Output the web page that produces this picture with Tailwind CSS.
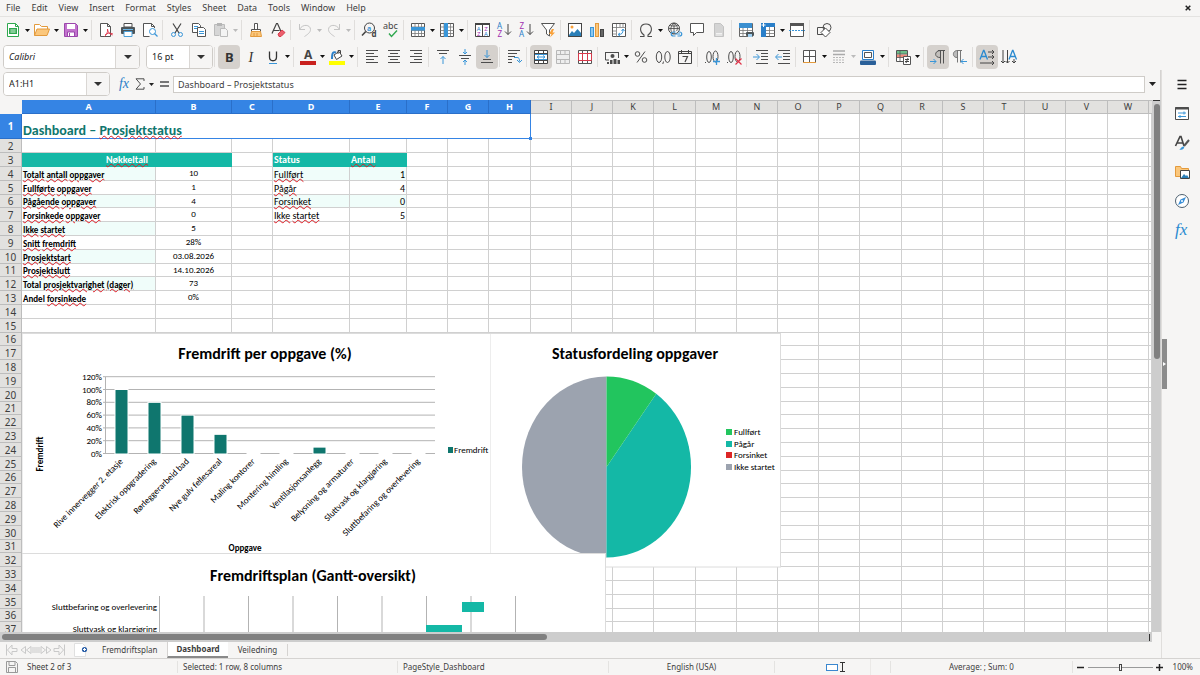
<!DOCTYPE html>
<html lang="en">
<head>
  <meta charset="UTF-8">
  <meta name="viewport" content="width=device-width, initial-scale=1.0">
  <title>Dashboard – Prosjektstatus</title>
  <script src="https://cdn.jsdelivr.net/npm/@tailwindcss/browser@4"></script>
</head>
<body class="flex h-screen flex-col overflow-hidden bg-[#f6f5f4] font-['Noto_Sans',sans-serif] text-[9px] leading-3 text-[#3d3d3d]">

  <!-- Menu bar -->
  <header class="flex h-[17px] shrink-0 items-center border-b border-[#e4e3e1] pr-1">
    <nav id="menu" class="flex flex-1 gap-px pl-px"></nav>
    <button aria-label="Close document" class="flex size-4 items-center justify-center">
      <svg class="size-[6px]" viewBox="0 0 6 6"><path d="M.7.7l4.6 4.6M5.3.7L.7 5.3" stroke="#222" stroke-width="1.5"/></svg>
    </button>
  </header>

  <!-- Standard toolbar -->
  <div id="standardBar" class="flex h-[26px] shrink-0 items-center pl-[2px]"></div>

  <!-- Formatting toolbar -->
  <div class="flex h-[27px] shrink-0 items-center pl-[3px]">
    <div class="mr-[6px] grid h-6 w-[137px] grid-cols-[1fr_24px] overflow-hidden rounded border border-[#cfccc8] bg-white">
      <select aria-label="Font name" class="col-span-full row-start-1 h-full appearance-none bg-white pl-[5px] text-[#222] italic outline-none"><option>Calibri</option></select>
      <span class="pointer-events-none col-start-2 row-start-1 flex items-center justify-center border-l border-[#dad7d4] bg-[#f6f5f4]"><svg class="h-1 w-2" viewBox="0 0 8 4"><path d="M0 0h8L4 4z" fill="#333"/></svg></span>
    </div>
    <div class="grid h-6 w-[67px] grid-cols-[1fr_23px] overflow-hidden rounded border border-[#cfccc8] bg-white">
      <select aria-label="Font size" class="col-span-full row-start-1 h-full appearance-none bg-white pl-[5px] text-[#222] outline-none"><option>16 pt</option></select>
      <span class="pointer-events-none col-start-2 row-start-1 flex items-center justify-center border-l border-[#dad7d4] bg-[#f6f5f4]"><svg class="h-1 w-2" viewBox="0 0 8 4"><path d="M0 0h8L4 4z" fill="#333"/></svg></span>
    </div>
    <div id="formatBar" class="flex items-center"></div>
  </div>

  <div class="flex min-h-0 flex-1">
    <main class="flex min-w-0 flex-1 flex-col">

      <!-- Formula bar -->
      <div class="flex h-[30px] shrink-0 items-center border-r border-[#d5d3d1] pb-[2px] pl-[3px]">
        <div class="mr-[6px] grid h-6 w-[107px] grid-cols-[1fr_23px] overflow-hidden rounded border border-[#cfccc8] bg-white">
          <select aria-label="Name box" class="col-span-full row-start-1 h-full appearance-none bg-white pl-[5px] text-[#222] outline-none"><option>A1:H1</option></select>
          <span class="pointer-events-none col-start-2 row-start-1 flex items-center justify-center border-l border-[#dad7d4] bg-[#f6f5f4]"><svg class="h-1 w-2" viewBox="0 0 8 4"><path d="M0 0h8L4 4z" fill="#333"/></svg></span>
        </div>
        <button aria-label="Function wizard" class="w-4 font-['Liberation_Serif',serif] text-[14px] text-[#2a7fc9] italic">fx</button>
        <button aria-label="Select function" class="flex w-4 justify-center"><svg class="h-3 w-[10px]" viewBox="0 0 10 12" fill="none" stroke="#4d4d4d"><path d="M9 3V.8H1L5.5 6 1 11.2h8V9"/></svg></button>
        <button aria-label="More functions" class="flex w-[7px] justify-center"><svg class="h-[3px] w-[5px]" viewBox="0 0 5 3"><path d="M0 0h5L2.500 3z" fill="#222"/></svg></button>
        <button aria-label="Formula" class="flex w-[18px] justify-center"><svg class="h-[6px] w-[9px]" viewBox="0 0 9 6"><path d="M0 1h9M0 5h9" stroke="#4d4d4d" stroke-width="1.500"/></svg></button>
        <input aria-label="Input line" value="Dashboard – Prosjektstatus" class="h-[17px] min-w-0 flex-1 border border-[#cfccc8] bg-white px-1 outline-none">
        <button aria-label="Expand formula bar" class="flex w-[15px] justify-center"><svg class="h-1 w-[7px]" viewBox="0 0 7 4"><path d="M0 0h7L3.500 4z" fill="#222"/></svg></button>
      </div>

      <div class="flex min-h-0 flex-1">
        <!-- Cells, with the charts floating over them -->
        <div class="relative min-w-0 flex-1 overflow-hidden bg-white">
          <table class="w-full table-fixed border-separate border-spacing-0">
            <colgroup id="cols"></colgroup>
            <thead><tr id="colHeads" class="h-[14px]"></tr></thead>
            <tbody id="rows"></tbody>
          </table>

          <svg id="barChart" role="img" aria-label="Fremdrift per oppgave (%)" class="absolute top-[233px] left-[22px] h-[221px] w-[470px] font-['Carlito','Lato',sans-serif]" viewBox="22 333 470 221">
            <rect x="22" y="333.500" width="470" height="220" fill="#fff" stroke="#dcdcdc"/>
            <text x="265" y="359" text-anchor="middle" class="text-[16px] font-bold">Fremdrift per oppgave (%)</text>
            <text x="245" y="551" text-anchor="middle" class="text-[9px] font-bold">Oppgave</text>
            <text transform="translate(43 454) rotate(-90)" text-anchor="middle" class="text-[9px] font-bold">Fremdrift</text>
            <rect x="448" y="447" width="5" height="6" fill="#0f766e"/>
            <text x="454" y="453" class="text-[9px]">Fremdrift (%)</text>
          </svg>

          <svg role="img" aria-label="Statusfordeling oppgaver" class="absolute top-[233px] left-[490px] h-[235px] w-[292px] font-['Carlito','Lato',sans-serif]" viewBox="490 333 292 235">
            <rect x="490" y="333.500" width="290.500" height="233.500" fill="#fff" stroke="#dcdcdc"/>
            <text x="635" y="359" text-anchor="middle" class="text-[16px] font-bold">Statusfordeling oppgaver</text>
            <path d="M606.500 467V376.500A84.500 90.500 0 0 0 606.500 557.500z" fill="#9ca3af"/>
            <path d="M606.500 467L656.200 393.800A84.500 90.500 0 0 1 606.500 557.500z" fill="#14b8a6"/>
            <path d="M606.500 467V376.500A84.500 90.500 0 0 1 656.200 393.800z" fill="#22c55e"/>
            <g class="text-[9px]">
              <rect x="726" y="429" width="6" height="6" fill="#22c55e"/><text x="734" y="435">Fullført</text>
              <rect x="726" y="441" width="6" height="6" fill="#14b8a6"/><text x="734" y="447">Pågår</text>
              <rect x="726" y="452" width="6" height="6" fill="#dc2626"/><text x="734" y="458">Forsinket</text>
              <rect x="726" y="464" width="6" height="6" fill="#9ca3af"/><text x="734" y="470">Ikke startet</text>
            </g>
          </svg>

          <svg role="img" aria-label="Fremdriftsplan (Gantt-oversikt)" class="absolute top-[453px] left-[22px] h-[300px] w-[584px] font-['Carlito','Lato',sans-serif]" viewBox="22 553 584 300">
            <rect x="22" y="553.500" width="583.500" height="299" fill="#fff" stroke="#dcdcdc"/>
            <text x="313" y="581" text-anchor="middle" class="text-[16px] font-bold">Fremdriftsplan (Gantt-oversikt)</text>
            <path d="M159.500 596v250M204 596v250M248.500 596v250M293 596v250M337.500 596v250M382 596v250M426.500 596v250M471 596v250M515.500 596v250" stroke="#b3b3b3"/>
            <rect x="462" y="602" width="22" height="10" fill="#14b8a6"/>
            <rect x="426" y="625" width="36" height="10" fill="#14b8a6"/>
            <text x="157" y="610" text-anchor="end" class="text-[9px]">Sluttbefaring og overlevering</text>
            <text x="157" y="632" text-anchor="end" class="text-[9px]">Sluttvask og klargjøring</text>
          </svg>
        </div>
        <div class="flex w-[9px] flex-col items-center bg-[#cdcdcd]">
          <div class="h-px w-[7px] bg-[#333]"></div>
          <div class="mt-[3px] h-[48%] w-[6px] rounded-full bg-[#808080]"></div>
        </div>
      </div>

      <div class="flex h-[10px] shrink-0 items-center bg-[#cdcdcd] pl-[2px]">
        <div class="h-[6px] w-[47%] rounded-full bg-[#808080]"></div>
        <div class="ml-auto h-[7px] w-px bg-[#333]"></div>
        <div class="ml-[2px] h-full w-[9px] bg-[#f6f5f4]"></div>
      </div>

      <!-- Sheet tabs -->
      <div class="flex h-4 shrink-0 items-center pl-[5px] text-[8px]">
        <button aria-label="First sheet" class="w-[15px]"><svg class="h-3 w-[14px]" viewBox="0 0 14 12" fill="none" stroke="#c9c9c9"><path d="M1.500.5v11M12 4.500H7V1L2.500 6 7 11V7.500h5z"/></svg></button>
        <button aria-label="Previous sheet" class="w-4"><svg class="h-3 w-4" viewBox="0 0 16 12" fill="none" stroke="#c9c9c9"><path d="M5.500 2.500L1 6l4.500 3.500zM11 2.500L6.500 6l4.500 3.500zM13 3v6M15 3v6"/></svg></button>
        <button aria-label="Next sheet" class="w-4"><svg class="h-3 w-4" viewBox="0 0 16 12" fill="none" stroke="#c9c9c9"><path d="M10.500 2.500L15 6l-4.500 3.500zM5 2.500L9.500 6 5 9.500zM3 3v6M1 3v6"/></svg></button>
        <button aria-label="Last sheet" class="w-[15px]"><svg class="h-3 w-[14px]" viewBox="0 0 14 12" fill="none" stroke="#c9c9c9"><path d="M12.500.5v11M2 4.500h5V1l4.500 5L7 11V7.500H2z"/></svg></button>
        <button aria-label="Add sheet" class="mr-[3px] ml-[6px] w-4"><svg class="h-[14px] w-4" viewBox="0 0 16 14"><path d="M1.500.5h8l3 3v10h-11z" fill="#fff" stroke="#e0e0e0"/><circle cx="11.500" cy="6.500" r="2.600" fill="#2a5fa8"/><path d="M11.500 5v3M10 6.500h3" stroke="#fff"/></svg></button>
        <button class="px-[10px]">Fremdriftsplan</button>
        <button class="h-full border-b-2 border-l border-b-[#8a8a8a] border-l-[#d5d3d1] bg-white px-2 font-bold">Dashboard</button>
        <button class="border-r border-[#d5d3d1] px-[10px]">Veiledning</button>
      </div>
    </main>

    <!-- Sidebar -->
    <aside class="flex w-[39px] items-center border-l border-[#e0dedc]">
      <button aria-label="Hide sidebar" class="flex h-[50px] w-[5px] items-center justify-center bg-[#8c8c8c]"><svg class="h-1 w-[3px]" viewBox="0 0 3 4"><path d="M0 0l3 2-3 2z" fill="#fff"/></svg></button>
      <div id="sidebar" class="flex flex-1 flex-col items-center gap-[7px] self-start pt-1 pr-1"></div>
    </aside>
  </div>

  <!-- Status bar -->
  <footer class="flex h-[17px] shrink-0 items-center border-t border-[#d5d3d1] pl-[6px] text-[8px]">
    <svg class="mr-[9px] size-3" viewBox="0 0 12 12" fill="none" stroke="#9a9a9a"><path d="M.5.5h9l2 2v9H.5zM3 .5v4h6v-4M2.500 11.500v-5h7v5"/></svg>
    <span class="w-[150px]">Sheet 2 of 3</span>
    <span class="w-[220px] border-l border-[#e4e3e1] pl-[5px]">Selected: 1 row, 8 columns</span>
    <span class="w-[211px] border-l border-[#e4e3e1] pl-[5px]">PageStyle_Dashboard</span>
    <span class="w-[166px] border-l border-[#e4e3e1] text-center">English (USA)</span>
    <span class="flex w-[96px] justify-end border-l border-[#e4e3e1] pr-6">
      <svg class="h-3 w-[20px]" viewBox="0 0 20 12" fill="none"><rect x=".5" y="3.500" width="11" height="6" stroke="#3a87cf" fill="#fff"/><path d="M14 1.500h5M14 10.500h5M16.500 1.500v9" stroke="#333"/></svg>
    </span>
    <span class="w-5 self-stretch border-l border-[#ebe9e7]"></span>
    <span class="flex-1 border-l border-[#e4e3e1] text-center">Average: ; Sum: 0</span>
    <div class="flex items-center gap-[3px] border-l border-[#e4e3e1] pr-[7px] pl-1">
      <button aria-label="Zoom out" class="flex w-2 justify-center"><svg class="size-[7px]" viewBox="0 0 7 7"><path d="M0 3.500h7" stroke="#222" stroke-width="1.500"/></svg></button>
      <input type="range" aria-label="Zoom" value="50" class="h-[9px] w-[65px] appearance-none bg-transparent [&::-webkit-slider-runnable-track]:h-px [&::-webkit-slider-runnable-track]:bg-[#9a9a9a] [&::-webkit-slider-thumb]:-mt-[3px] [&::-webkit-slider-thumb]:h-[7px] [&::-webkit-slider-thumb]:w-[3px] [&::-webkit-slider-thumb]:appearance-none [&::-webkit-slider-thumb]:border [&::-webkit-slider-thumb]:border-[#444] [&::-webkit-slider-thumb]:bg-[#f6f5f4]">
      <button aria-label="Zoom in" class="flex w-2 justify-center"><svg class="size-[7px]" viewBox="0 0 7 7"><path d="M0 3.500h7M3.500 0v7" stroke="#222" stroke-width="1.500"/></svg></button>
      <span class="ml-[6px]">100%</span>
    </div>
  </footer>

  <script>
    const lines = (...p) => p.map(([x1, x2, y]) => `M${x1} ${y}h${x2 - x1}`).join("");
    const icons = {
      new: `<path d="M2.500 1.500h8l3 3v10h-11z" fill="#fff" stroke="#2fa84f"/><path d="M10.500 1.500v3h3" stroke="#2fa84f"/><rect x="4" y="6" width="8" height="6" fill="#2fa84f"/><path d="M5 8h6M5 10h6M7 7v4M9 7v4" stroke="#d6f2dc" stroke-width=".6"/>`,
      open: `<path d="M.5 13.500v-11h5l2 2h6v3" fill="#fff" stroke="#e39a3c"/><path d="M.5 13.500l2.500-6.500h12.500l-2.500 6.500z" fill="#fbc77c" stroke="#e39a3c"/>`,
      save: `<path d="M1.500 1.500h11l2 2v11h-13z" fill="#c273cd" stroke="#9b46ab"/><path d="M4 2h8v5H4z" fill="#fff"/><path d="M4.500 14v-4h7v4" fill="#fff" stroke="#9b46ab"/><path d="M6.500 11v3" stroke="#9b46ab"/>`,
      pdf: `<path d="M2.500 1.500h7l3 3v10h-10z" fill="#fff" stroke="#555"/><path d="M9.500 1.500v3h3" stroke="#555"/><path d="M9.500 7c0 3 2.500 5.500 5 6M9.500 7c.5 3-1 6-3 7.500M7 13c2-2 5-2.500 8-1" stroke="#e0344a" stroke-width=".9"/>`,
      print: `<path d="M4 1.500h8V5H4z" fill="#fff" stroke="#4d4d4d"/><rect x="1" y="5" width="14" height="7" rx="1" fill="#4d5559"/><path d="M4 9.500h8v5H4z" fill="#fff" stroke="#4a9fd8"/><path d="M3 7.500h10" stroke="#6db8e8"/>`,
      preview: `<path d="M12.500 6V4.500l-3-3h-8v13h6" fill="#fff" stroke="#555"/><path d="M9.500 1.500v3h3" stroke="#555"/><circle cx="10.500" cy="9.500" r="3" fill="#fff" stroke="#3a96d8"/><path d="M12.500 11.500l3 3" stroke="#3a96d8" stroke-width="1.300"/>`,
      cut: `<path d="M4 1.500l6 9.500M12 1.500L6 11" stroke="#444" stroke-width="1.200"/><circle cx="4.500" cy="12.500" r="2" stroke="#3a96d8"/><circle cx="11.500" cy="12.500" r="2" stroke="#3a96d8"/>`,
      copy: `<path d="M1.500 1.500h6l2 2v7h-8z" fill="#fff" stroke="#555"/><path d="M6.500 5.500h6l2 2v7h-8z" fill="#fff" stroke="#555"/><path d="M3 4.500h4M3 6.500h3M8 9.500h5M8 11.500h5" stroke="#3a96d8"/>`,
      paste: `<path d="M1.500 2.500h10v4M1.500 2.500v11h5" stroke="#bbb"/><path d="M2 3h9v10H2z" fill="#d6d6d6"/><rect x="4" y="1" width="5" height="3" fill="#b5b5b5"/><path d="M7.500 6.500h5l2 2v6h-7z" fill="#f4f4f4" stroke="#bbb"/>`,
      clone: `<path d="M6.500 1.500h3v6h-3z" fill="#fff" stroke="#555"/><path d="M3.500 7.500h9v2h-9z" fill="#fff" stroke="#555"/><path d="M3.500 9.500h9l1 5h-11z" fill="#fbc77c" stroke="#e39a3c"/><path d="M6 11v3M9 11v3" stroke="#e39a3c"/>`,
      clear: `<path d="M2 11.500L6.500 1.500h1l3.500 8M3.500 8.500h6" stroke="#444" stroke-width="1.200"/><path d="M8 12l4-4 3 2.500-4 4H9z" fill="#ec5f6c" stroke="#d83a4c"/>`,
      undo: `<path d="M2.500 2v5.500H8M2.500 7.500c3-6 11-5 11 0 0 3-3 5-6 7" stroke="#c4c4c4"/>`,
      redo: `<path d="M13.500 2v5.500H8M13.500 7.500c-3-6-11-5-11 0 0 3 3 5 6 7" stroke="#c4c4c4"/>`,
      find: `<circle cx="8.500" cy="6" r="5" stroke="#444"/><path d="M4.800 9.500L1 13.500" stroke="#444" stroke-width="1.600"/><text x="6" y="8.500" font-size="7" font-weight="bold" fill="#3a96d8">a</text><text x="10.500" y="15" font-size="8" font-weight="bold" fill="#444">d</text>`,
      spell: `<text x="0" y="7" font-size="9" fill="#444">abc</text><path d="M6 11.500l2.500 3L14 8.500" stroke="#2fa84f" stroke-width="1.400"/>`,
      row: `<path d="M1.500 1.500h13v13h-13z" fill="#fff" stroke="#555"/><path d="M5 1.500v13M8.500 1.500v13M11.500 1.500v13M1.500 5h13M1.500 8.500h13M1.500 11.500h13" stroke="#777" stroke-width=".8"/><rect x="1" y="5" width="14" height="3.500" fill="#3a96d8"/>`,
      col: `<path d="M1.500 1.500h13v13h-13z" fill="#fff" stroke="#555"/><path d="M5 1.500v13M8.500 1.500v13M11.500 1.500v13M1.500 5h13M1.500 8.500h13M1.500 11.500h13" stroke="#777" stroke-width=".8"/><rect x="5" y="1" width="4" height="14" fill="#3a96d8"/>`,
      sort: `<path d="M1.500 1.500h14v13h-14zM8.500 1.500v13" fill="#fff" stroke="#444"/><path d="M1 2h15" stroke="#444" stroke-width="2"/><text x="2.800" y="8.500" font-size="6" fill="#2a7fc9">A</text><text x="3" y="14" font-size="6" fill="#a030b0">Z</text><text x="10.300" y="8.500" font-size="6" fill="#a030b0">Z</text><text x="10" y="14" font-size="6" fill="#2a7fc9">A</text>`,
      asc: `<text x="1" y="7" font-size="8" fill="#2a7fc9">A</text><text x="1.500" y="15" font-size="8" fill="#a030b0">Z</text><path d="M12 2v10.500M9 9.500l3 3 3-3" stroke="#444"/>`,
      desc: `<text x="1.500" y="7" font-size="8" fill="#a030b0">Z</text><text x="1" y="15" font-size="8" fill="#2a7fc9">A</text><path d="M12 2v10.500M9 9.500l3 3 3-3" stroke="#444"/>`,
      filter: `<path d="M1.500 1.500h13L9.500 8v6l-3-2V8z" fill="#fff" stroke="#555"/><path d="M12 7l-3 5h2.500L10 15.500l5-5h-2.500L14 7z" fill="#f9a13a"/>`,
      image: `<rect x="1.500" y="1.500" width="13" height="13" fill="#fff" stroke="#444"/><path d="M2 13l3-4 2 2 3.500-4 3.500 4v3H2z" fill="#2a7fb8"/><circle cx="5" cy="5" r="1.500" fill="#f9a13a"/>`,
      chart: `<rect x="1.500" y="5.500" width="3" height="9" fill="#8cc8f0" stroke="#3a96d8"/><rect x="6.500" y="1.500" width="3" height="13" fill="#fbc77c" stroke="#e39a3c"/><rect x="11.500" y="7.500" width="3" height="7" fill="#666" stroke="#444"/>`,
      pivot: `<path d="M1.500 1.500h13v13h-13z" fill="#fff" stroke="#555"/><path d="M2 5.500h13M5.500 2v13M9 2v3M12 2v3M2 9h3M2 12h3" stroke="#777" stroke-width=".8"/><path d="M7.500 12.500c3.500 0 4.500-1.500 4.500-5M10.500 9L12 7l1.500 2M9 11l-2 1.500L9 14" stroke="#3a96d8"/>`,
      omega: `<path d="M2 14.500h4v-1.500C.5 9 2 2 8 2s7.500 7 2 11v1.500h4" stroke="#4d4d4d" stroke-width="1.100"/>`,
      link: `<circle cx="7" cy="6.500" r="5.500" stroke="#444"/><path d="M1.500 6.500h11M7 1v11M3 3c2 1.500 6 1.500 8 0M7 1C3 4 3 9 6 12M7 1c4 3 4 6 2.500 8" stroke="#444" stroke-width=".8"/><path d="M8.500 10h-2c-3 0-3 4 0 4h2M11.500 10h1c3 0 3 4 0 4h-2M8 12h5" stroke="#3a96d8" stroke-width="1.200"/>`,
      comment: `<path d="M1.500 1.500h13v9h-7l-3 3v-3h-3z" fill="#fff" stroke="#555"/>`,
      headers: `<path d="M3.500 1.500h6l3 3v10h-9z" fill="#d4d4d4" stroke="#c2c2c2"/><path d="M5 11.500h6M5 13h6" stroke="#f2f2f2"/>`,
      area: `<path d="M1.500 1.500h13v13h-13z" fill="#fff" stroke="#666"/><path d="M5 1.500v13M9.500 1.500v13M1.500 8.500h13M1.500 11.500h13" stroke="#777" stroke-width=".8"/><rect x="1" y="1" width="13" height="5" fill="#3a8fd0"/><rect x="8" y="10" width="8" height="4" rx="1" fill="#4d5559"/><rect x="10" y="12" width="4" height="3" fill="#9fd0f2"/>`,
      freeze: `<path d="M1.500 1.500h13v13h-13z" fill="#fff" stroke="#555"/><path d="M9.500 1.500v13M1.500 8.500h13M1.500 11.500h13" stroke="#777" stroke-width=".8"/><path d="M1 1h5v14H1zM1 1h14v4H1z" fill="#2a7fc9"/><path d="M3.500 1v4M1.500 3h4" stroke="#fff"/>`,
      split: `<path d="M1.500 1.500h13v13h-13z" fill="#fff" stroke="#555"/><path d="M1 2.500h14" stroke="#555" stroke-width="3"/><path d="M0 8.500h16" stroke="#3a96d8" stroke-dasharray="2 1"/>`,
      shapes: `<circle cx="11" cy="5.500" r="4" stroke="#4d4d4d"/><path d="M1.500 5.500h7v7h-7z" stroke="#4d4d4d"/><path d="M9.500 6l4.500 4.500-4.500 4.500L5 10.500z" fill="#fff" stroke="#4d4d4d"/>`,
      bold: `<text x="4" y="13" font-size="13" font-weight="bold" fill="#333">B</text>`,
      italic: `<text x="5.500" y="13" font-size="14" font-style="italic" font-family="Liberation Serif" fill="#333">I</text>`,
      underline: `<path d="M4.500 2.500v5.500c0 5 7 5 7 0V2.500" stroke="#333" stroke-width="1.300"/><path d="M4 14.500h8" stroke="#3a96d8"/>`,
      color: `<text x="4" y="10" font-size="12" font-weight="bold" fill="#444">A</text><rect x="0" y="12" width="16" height="4" fill="#c9211e"/>`,
      fill: `<path d="M5 6l5-3.500L13 7l-5.500 3.500z" fill="#fff" stroke="#444"/><path d="M9 5V1.500h2.500V5" stroke="#444"/><path d="M7 3.500C4 2.500 3 3.500 3 10" stroke="#2a7fc9" stroke-width="2"/><rect x="0" y="12" width="16" height="4" fill="#ff0"/>`,
      left: `<path d="${lines([2, 14, 1.500], [2, 10, 4.500], [2, 14, 7.500], [2, 10, 10.500], [2, 14, 13.500])}" stroke="#4d4d4d"/>`,
      center: `<path d="${lines([2, 14, 1.500], [4, 12, 4.500], [2, 14, 7.500], [4, 12, 10.500], [2, 14, 13.500])}" stroke="#4d4d4d"/>`,
      right: `<path d="${lines([2, 14, 1.500], [6, 14, 4.500], [2, 14, 7.500], [6, 14, 10.500], [2, 14, 13.500])}" stroke="#4d4d4d"/>`,
      top: `<path d="M2 1.500h12M4 4.500h8" stroke="#4d4d4d"/><path d="M8 15V7.500M5.500 10L8 7.500l2.500 2.500" stroke="#3a96d8"/>`,
      middle: `<path d="M2 6.500h12M4 9.500h8" stroke="#4d4d4d"/><path d="M8 0v5M6 3l2 2 2-2M8 16v-5M6 13l2-2 2 2" stroke="#3a96d8"/>`,
      bottom: `<path d="M4 10.500h8M2 13.500h12" stroke="#4d4d4d"/><path d="M8 1v7.500M5.500 6L8 8.500 10.500 6" stroke="#3a96d8"/>`,
      wrap: `<path d="M2 1.500h12M2 4.500h9M2 7.500h7M2 10.500h4M2 13.500h4" stroke="#4d4d4d"/><path d="M8 8.500h3c2 0 2.500 1 2.500 4M11 11l2.500 2.500L16 11" stroke="#3a96d8"/>`,
      mergeC: `<path d="M1.500 1.500h13v13h-13z" fill="#fff" stroke="#444"/><path d="M1.500 4.500h13M1.500 11.500h13M5.500 1.500v3M10.500 1.500v3M5.500 11.500v3M10.500 11.500v3" stroke="#444"/><path d="M2 5.500h12M2 10.500h12M4 8h8M6 6.500L4 8l2 1.500M10 6.500L12 8l-2 1.500" stroke="#3a96d8"/>`,
      merge: `<path d="M1.500 1.500h13v13h-13zM1.500 5.500h13M1.500 10.500h13M5.500 1.500v4M10 1.500v4M5.500 10.500v4M10 10.500v4" fill="#eee" stroke="#b8b8b8"/>`,
      unmerge: `<path d="M1.500 1.500h13v13h-13zM5.500 1.500v3M10.500 1.500v3M5.500 11.500v3M10.500 11.500v3" fill="#fff" stroke="#555"/><path d="M1.500 4.500h13v7h-13zM5.500 4.500v7M10.500 4.500v7" stroke="#d83a4c"/>`,
      currency: `<path d="M1 3.500h14M14.500 3v6M1.500 3v8H5" stroke="#4d4d4d"/><circle cx="8.500" cy="7" r="2" fill="#4d4d4d"/><path d="M6 11h2.500v4H6zM9.500 10h3v5h-3zM13.500 11H16v4h-2.500zM3 13h2v2H3z" fill="#4d4d4d"/>`,
      percent: `<circle cx="4.500" cy="5" r="2.300" stroke="#4d4d4d"/><circle cx="11.500" cy="11" r="2.300" stroke="#4d4d4d"/><path d="M12 2.500l-8 11" stroke="#4d4d4d"/>`,
      number: `<ellipse cx="4" cy="8" rx="2.700" ry="5.500" stroke="#4d4d4d"/><ellipse cx="12.500" cy="8" rx="2.700" ry="5.500" stroke="#4d4d4d"/><path d="M8.500 12.500l-.7 2.500" stroke="#4d4d4d"/>`,
      date: `<path d="M1.500 2.500h13v12h-13zM1.500 4.500h13M4.500 1v3M11.500 1v3" stroke="#444"/><path d="M5.500 7.500h5l-2.500 5.500" stroke="#444" stroke-width="1.200"/>`,
      addDec: `<path d="M1 13.500h1" stroke="#4d4d4d"/><ellipse cx="5" cy="8" rx="2.300" ry="5.500" stroke="#4d4d4d"/><ellipse cx="11.500" cy="7.500" rx="2.500" ry="5.500" stroke="#4d4d4d"/><path d="M9 12.500h7M12.500 9v7" stroke="#3a96d8" stroke-width="1.300"/>`,
      delDec: `<path d="M1 13.500h1" stroke="#4d4d4d"/><ellipse cx="5" cy="8" rx="2.300" ry="5.500" stroke="#4d4d4d"/><ellipse cx="11.500" cy="7.500" rx="2.500" ry="5.500" stroke="#4d4d4d"/><path d="M9.500 9.500l6 6M15.500 9.500l-6 6" stroke="#e0344a" stroke-width="1.200"/>`,
      indent: `<path d="M3 1.500h12M8 4.500h7M8 7.500h7M8 10.500h7M3 14.500h12" stroke="#4d4d4d"/><path d="M0 8h6M3.500 5L6.500 8l-3 3" stroke="#3a96d8"/>`,
      outdent: `<path d="M3 1.500h12M8 4.500h7M8 7.500h7M8 10.500h7M3 14.500h12" stroke="#4d4d4d"/><path d="M7 8H1M3.500 5L.5 8l3 3" stroke="#3a96d8"/>`,
      borders: `<path d="M1.500 1.500h12v12h-12zM7.500 1.500v12M1.500 7.500h12" fill="#fff" stroke="#555"/><path d="M1 13.500h13" stroke="#e39a3c"/>`,
      style: `<path d="M2 2h12M2 5.500h12" stroke="#aaa" stroke-width="1.500"/><path d="M2 8.500h12M2 11h12M2 13.500h12" stroke="#b8b8b8" stroke-dasharray="2 1"/>`,
      borderColor: `<path d="M2.500 1.500h11v9h-11z" fill="#fff" stroke="#2a7fc9"/><path d="M4.500 3.500h7v5h-7z" stroke="#555"/><rect x="0" y="11.500" width="16" height="4.500" rx="1" fill="#2a6099"/>`,
      conditional: `<path d="M1.500 1.500h11v11h-11z" fill="#fff" stroke="#555"/><path d="M2 2h10v3H2z" fill="#6cc08b"/><path d="M2 5.500h10v3H2z" fill="#f08a7a"/><path d="M5 1.500v11M1.500 5h11M1.500 8.500h11" stroke="#555" stroke-width=".8"/><path d="M8.500 7.500h7v8h-7z" fill="#fff" stroke="#555"/><path d="M10 10.500h4M10 12.500h4M13 9l-2 5" stroke="#444"/>`,
      ltr: `<path d="M10.500 1.500C4 1.500 4 8.500 10.500 8.500z" fill="#c2bfbb"/><path d="M8 1.500h7M13.500 1.500v13M10.500 1.500v13M10.500 8.500C4 9 4 1.500 10.500 1.500" stroke="#555"/><path d="M0 12.500h6M3.500 10L6 12.500 3.500 15" stroke="#3a96d8"/>`,
      rtl: `<path d="M5.500 1.500C0 1.500 0 8.500 5.500 8.500z" fill="#bbb"/><path d="M5 1.500h5M8.500 1.500v12M5.500 1.500v12M5.500 8.500C0 9 0 1.500 5.500 1.500" stroke="#777"/><path d="M15 12.500H9M11.500 10L9 12.500l2.500 2.500" stroke="#3a96d8"/>`,
      textH: `<path d="M1 10.500L4.500 1.500h.5l3.500 9M2.500 7.500h5" stroke="#2a8ad0" stroke-width="1.300"/><path d="M9 3h6M13 1l2 2-2 2M9 8h6M13 6l2 2-2 2M1 14h14M13 12l2 2-2 2" stroke="#444"/>`,
      textV: `<path d="M8 10.500L11.500 1.500h.5l3.500 9M9.500 7.500h5" stroke="#2a8ad0" stroke-width="1.300"/><path d="M2 1v13M0 12l2 2 2-2M6.500 1v13M4.500 12l2 2 2-2M13 10v4M11 12l2 2 2-2" stroke="#444"/>`,
      menu: `<path d="M3.500 3.500h9M3.500 7.500h9M3.500 11.500h9" stroke="#222" stroke-width="1.500"/>`,
      properties: `<path d="M1.500 1.500h13v12h-13z" fill="#fff" stroke="#4d4d4d"/><path d="M1 2.500h14" stroke="#4d4d4d" stroke-width="2"/><path d="M4 7h8M4 10.500h8" stroke="#3a96d8"/><path d="M10 5.500v3M6 9v3" stroke="#3a96d8"/>`,
      styles: `<path d="M1.500 11L6 1.500h1L10 11M3 8h6" stroke="#444" stroke-width="1.600"/><path d="M15 5l-5 6" stroke="#555" stroke-width="2"/><path d="M5 14.500c2 0 2-3.500 5-3 1 2-2 4-5 3z" fill="#3a96d8"/>`,
      gallery: `<path d="M1.500 12.500v-10h5l1 2h7v8z" fill="#fbc77c" stroke="#e39a3c"/><path d="M6.500 6.500h9v8h-9z" fill="#fff" stroke="#444"/><path d="M7 14l3-4 2 2 1-1 2 3z" fill="#2a7fb8"/>`,
      navigator: `<circle cx="8" cy="8" r="6.500" fill="#fff" stroke="#4d6070"/><path d="M12 4L9.500 9.500 4 12l2.500-5.500z" fill="#3a8fd8"/><circle cx="8" cy="8" r="1" fill="#fff"/>`,
      functions: `<text x="1" y="13" font-size="17" font-style="italic" font-family="Liberation Serif" fill="#2a8ad0">fx</text>`
    };
    const svg = name => `<svg class="size-4 overflow-visible" viewBox="0 0 16 16" fill="none">${icons[name]}</svg>`;

    // ">" after a name adds a drop-down arrow, "~" a grey one, "*" marks a pressed button, "|" is a separator
    function buildBar(id, spec) {
      let afterDrop = false;
      document.getElementById(id).innerHTML = spec.split(" ").map(item => {
        if (item === "|") {
          return `<span class="${afterDrop ? "ml-[2px]" : "ml-px"} mr-[3px] h-5 w-px bg-[#e0dedc]"></span>`;
        }
        const [, name, flags] = item.match(/^(\w+)(\W*)$/);
        afterDrop = /[>~]/.test(flags);
        const pressed = flags.includes("*");
        let html = `<button aria-label="${name}" ${pressed ? 'aria-pressed="true"' : ""} class="flex h-6 w-[22px] items-center justify-center rounded ${pressed ? "bg-[#d5d1cd]" : ""}">${svg(name)}</button>`;
        if (afterDrop) {
          html += `<button aria-label="${name} options" class="flex h-6 w-[7px] items-center justify-center"><svg class="h-[3px] w-[5px]" viewBox="0 0 5 3"><path d="M0 0h5L2.500 3z" fill="${flags.includes("~") ? "#bbb" : "#111"}"/></svg></button>`;
        }
        return html;
      }).join("");
    }
    buildBar("standardBar", "new> open> save> | pdf print preview | cut copy paste~ | clone clear | undo~ redo~ | find spell | row> col> | sort asc desc filter | image chart pivot | omega> link comment headers | area freeze> split | shapes");
    buildBar("formatBar", "| bold* italic underline> | color> fill> | left center right | top middle bottom* | wrap | mergeC* merge unmerge | currency> percent number date | addDec delDec | indent outdent | borders> style~ borderColor> | conditional> | ltr* rtl | textH* textV");

    document.getElementById("menu").innerHTML = ["File", "Edit", "View", "Insert", "Format", "Styles", "Sheet", "Data", "Tools", "Window", "Help"]
      .map(m => `<button class="px-[5px]">${m}</button>`).join("");
    document.getElementById("sidebar").innerHTML = ["menu", "properties", "styles", "gallery", "navigator", "functions"]
      .map(n => `<button aria-label="${n}" class="flex size-[22px] items-center justify-center">${svg(n)}</button>`).join("");

    // Sheet
    const widths = [134, 76, 41, 77, 57, 41, 41, 42, 41, 41, 41, 42, 41, 41, 41, 41, 42, 41, 41, 41, 41, 42, 41];
    const letters = "ABCDEFGHIJKLMNOPQRSTUVW".split("");
    document.getElementById("cols").innerHTML = `<col style="width:22px">` + widths.map(w => `<col style="width:${w}px">`).join("") + "<col>";
    document.getElementById("colHeads").innerHTML = `<th class="p-0 bg-[#f6f5f4]"></th>` + letters.map((l, i) => i < 8
      ? `<th class="border-r border-b border-[#2a6fc9] bg-[#3584e4] p-0 font-bold text-white">${l}</th>`
      : `<th class="border-t border-r border-b border-[#bdbdbd] bg-[#e2e1df] p-0 font-normal">${l}</th>`).join("") + `<th class="border-t border-b border-[#bdbdbd] bg-[#e2e1df] p-0"></th>`;

    const facts = [
      ["Totalt antall oppgaver", "10"], ["Fullførte oppgaver", "1"], ["Pågående oppgaver", "4"], ["Forsinkede oppgaver", "0"],
      ["Ikke startet", "5"], ["Snitt fremdrift", "28%"], ["Prosjektstart", "03.08.2026"], ["Prosjektslutt", "14.10.2026"],
      ["Total prosjektvarighet (dager)", "73"], ["Andel forsinkede", "0%"]
    ];
    const statuses = [["Fullført", 1], ["Pågår", 4], ["Forsinket", 0], ["Ikke startet", 5]];
    const spell = t => t.split(" ").map(w => /^(Total|Andel)$/.test(w) ? w : `<span class="underline decoration-[#e01b24] decoration-wavy decoration-1 underline-offset-0">${w}</span>`).join(" ");
    const blank = n => `<td class="border-r border-b border-[#d0d0d0] p-0"></td>`.repeat(n);

    let html = "";
    for (let r = 1; r <= 37; r++) {
      let cells = "";
      if (r === 1) {
        cells = `<td colspan="8" class="relative border-r border-b border-[#3584e4] p-0 pl-px align-bottom text-[14px] leading-[14px] font-bold whitespace-nowrap text-[#0f766e]">Dashboard – ${spell("Prosjektstatus")}<span class="absolute -right-[2px] -bottom-[2px] size-[3px] bg-[#3584e4]"></span></td>` + blank(16);
      } else if (r === 3) {
        cells = `<td colspan="2" class="bg-[#14b8a6] p-0 text-center font-bold text-white">${spell("Nøkkeltall")}</td>` + blank(1)
          + `<td class="bg-[#14b8a6] p-0 pl-px font-bold text-white">Status</td><td class="bg-[#14b8a6] p-0 pl-px font-bold text-white">${spell("Antall")}</td>` + blank(19);
      } else if (r >= 4 && r <= 13) {
        const [label, value] = facts[r - 4];
        const tint = r % 2 ? "bg-white" : "bg-[#f0fdfa]";
        cells = `<td class="border-r border-b border-[#d0d0d0] p-0 pl-px align-bottom text-[9px] leading-[10px] font-bold whitespace-nowrap ${tint}">${spell(label)}</td><td class="border-r border-b border-[#d0d0d0] p-0 text-center align-top text-[9px]">${value}</td>` + blank(1);
        const s = statuses[r - 4];
        cells += s ? `<td class="border-r border-b border-[#d0d0d0] p-0 pl-px align-bottom leading-[11px] ${tint}">${spell(s[0])}</td><td class="border-r border-b border-[#d0d0d0] p-0 pr-px text-right align-bottom leading-[11px] ${tint}">${s[1]}</td>` + blank(19) : blank(21);
      } else {
        cells = blank(24);
      }
      const height = r === 1 ? "h-[25px]" : r % 5 === 1 ? "h-[13px]" : "h-[14px]";
      const head = r === 1 ? "border-[#2a6fc9] bg-[#3584e4] font-bold text-white" : "border-[#bdbdbd] bg-[#e2e1df] font-normal text-[#3d3d3d]";
      html += `<tr class="${height} font-['Carlito','Lato',sans-serif] text-[10px] leading-3 text-black"><th class="border-r border-b p-0 font-['Noto_Sans',sans-serif] text-[10px] ${head}">${r}</th>${cells}</tr>`;
    }
    document.getElementById("rows").innerHTML = html;

    // Bar chart
    const tasks = [
      ["Rive innervegger 2. etasje", 100], ["Elektrisk oppgradering", 80], ["Rørleggerarbeid bad", 60], ["Nye gulv fellesareal", 30], ["Maling kontorer", 0],
      ["Montering himling", 0], ["Ventilasjonsanlegg", 10], ["Belysning og armaturer", 0], ["Sluttvask og klargjøring", 0], ["Sluttbefaring og overlevering", 0]
    ];
    let plot = `<path d="M105.500 377v77" stroke="#b3b3b3"/>`;
    for (let v = 0; v <= 120; v += 20) {
      const y = 453.500 - v * 0.64;
      plot += `<path d="M103 ${y}H435" stroke="#b3b3b3"/><text x="102" y="${y + 3}" text-anchor="end" class="text-[9px]">${v}%</text>`;
    }
    tasks.forEach(([name, v], i) => {
      const x = 121.500 + i * 33;
      plot += `<rect x="${x - 6.500}" y="${453.500 - v * 0.64}" width="13" height="${v * 0.64 + 0.5}" fill="#0f766e" stroke="#fff"/>`;
      plot += `<text transform="translate(${x + 2} 462) rotate(-45)" text-anchor="end" class="text-[9px]">${name}</text>`;
    });
    document.getElementById("barChart").insertAdjacentHTML("beforeend", plot);
  </script>
</body>
</html>
